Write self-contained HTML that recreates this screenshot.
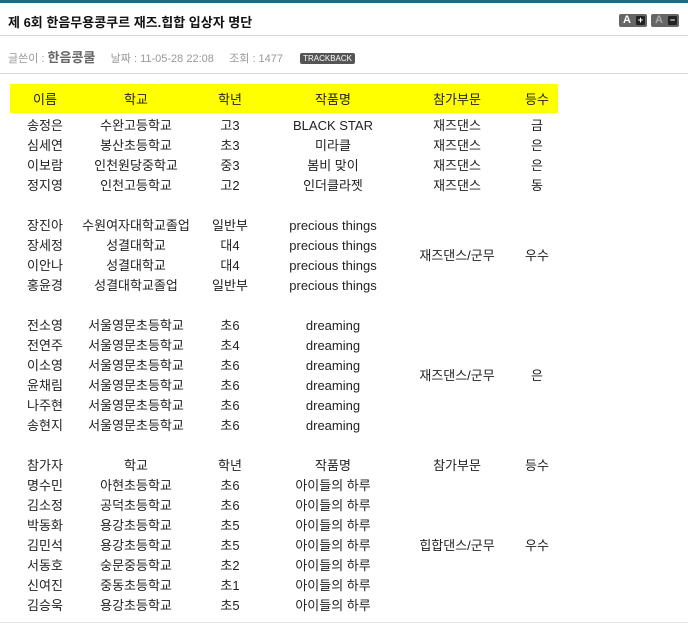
<!DOCTYPE html>
<html><head><meta charset="utf-8"><style>
body{margin:0;width:688px;height:624px;background:#fff;position:relative;overflow:hidden;font-family:"Liberation Sans","Noto Sans CJK KR",sans-serif;color:#222}
.topbar{position:absolute;left:0;top:0;width:688px;height:3px;background:#1d6a85}
.title{position:absolute;left:8px;top:12px;font-size:13px;font-weight:bold;color:#111}
.hr{position:absolute;left:0;width:688px;height:1px;background:#d8d8d8}
.meta{position:absolute;left:8px;top:47px;font-size:11px;color:#999}
.meta b{font-size:13px;color:#666}
.tb{display:inline-block;background:#555;color:#fff;font-size:8px;padding:1px 3px;border-radius:2px;vertical-align:1px;margin-left:14px}
.btn{position:absolute;top:14px;width:28px;height:13px;background:#666;border-radius:2px;font-size:11px;font-weight:bold;color:#fff;line-height:13px}
.btn span{position:absolute;left:4px}
.btn i{position:absolute;right:2px;top:2px;width:9px;height:9px;background:#222;border-radius:1px;color:#fff;font-style:normal;font-size:9px;line-height:9px;text-align:center}
.yellow{position:absolute;left:10px;top:84px;width:548px;height:29px;background:#ffff00}
.w{position:absolute;left:0;top:2px;width:688px;height:624px}
.r{position:absolute;left:0;height:20px;line-height:20px;font-size:13px;width:688px}
.r span{position:absolute;text-align:center;white-space:nowrap}
.a{left:10px;width:70px}.b{left:80px;width:112px}.c{left:192px;width:76px}.d{left:268px;width:130px}.e{left:398px;width:118px}.f{left:516px;width:42px}
</style></head><body>
<div class="topbar"></div>
<div class="title">제 6회 한음무용콩쿠르 재즈.힙합 입상자 명단</div>
<div class="btn" style="left:619px"><span>A</span><i>+</i></div>
<div class="btn" style="left:651px;color:#aaa"><span>A</span><i>−</i></div>
<div class="hr" style="top:35px"></div>
<div class="meta">글쓴이 : <b>한음콩쿨</b> &nbsp;&nbsp;&nbsp; 날짜 : 11-05-28 22:08 &nbsp;&nbsp;&nbsp; 조회 : 1477 <span class="tb">TRACKBACK</span></div>
<div class="hr" style="top:73px"></div>
<div class="hr" style="top:622px;background:#e4e4e4"></div>
<div class="yellow"></div>
<div class="w">
<div class="r" style="top:88px"><span class="a">이름</span><span class="b">학교</span><span class="c">학년</span><span class="d">작품명</span><span class="e">참가부문</span><span class="f">등수</span></div>

<div class="r" style="top:114px"><span class="a">송정은</span><span class="b">수완고등학교</span><span class="c">고3</span><span class="d">BLACK STAR</span><span class="e">재즈댄스</span><span class="f">금</span></div>
<div class="r" style="top:134px"><span class="a">심세연</span><span class="b">봉산초등학교</span><span class="c">초3</span><span class="d">미라클</span><span class="e">재즈댄스</span><span class="f">은</span></div>
<div class="r" style="top:154px"><span class="a">이보람</span><span class="b">인천원당중학교</span><span class="c">중3</span><span class="d">봄비 맞이</span><span class="e">재즈댄스</span><span class="f">은</span></div>
<div class="r" style="top:174px"><span class="a">정지영</span><span class="b">인천고등학교</span><span class="c">고2</span><span class="d">인더클라젯</span><span class="e">재즈댄스</span><span class="f">동</span></div>

<div class="r" style="top:214px"><span class="a">장진아</span><span class="b">수원여자대학교졸업</span><span class="c">일반부</span><span class="d">precious things</span></div>
<div class="r" style="top:234px"><span class="a">장세정</span><span class="b">성결대학교</span><span class="c">대4</span><span class="d">precious things</span></div>
<div class="r" style="top:244px"><span class="e">재즈댄스/군무</span><span class="f">우수</span></div>
<div class="r" style="top:254px"><span class="a">이안나</span><span class="b">성결대학교</span><span class="c">대4</span><span class="d">precious things</span></div>
<div class="r" style="top:274px"><span class="a">홍윤경</span><span class="b">성결대학교졸업</span><span class="c">일반부</span><span class="d">precious things</span></div>

<div class="r" style="top:314px"><span class="a">전소영</span><span class="b">서울영문초등학교</span><span class="c">초6</span><span class="d">dreaming</span></div>
<div class="r" style="top:334px"><span class="a">전연주</span><span class="b">서울영문초등학교</span><span class="c">초4</span><span class="d">dreaming</span></div>
<div class="r" style="top:354px"><span class="a">이소영</span><span class="b">서울영문초등학교</span><span class="c">초6</span><span class="d">dreaming</span></div>
<div class="r" style="top:364px"><span class="e">재즈댄스/군무</span><span class="f">은</span></div>
<div class="r" style="top:374px"><span class="a">윤채림</span><span class="b">서울영문초등학교</span><span class="c">초6</span><span class="d">dreaming</span></div>
<div class="r" style="top:394px"><span class="a">나주현</span><span class="b">서울영문초등학교</span><span class="c">초6</span><span class="d">dreaming</span></div>
<div class="r" style="top:414px"><span class="a">송현지</span><span class="b">서울영문초등학교</span><span class="c">초6</span><span class="d">dreaming</span></div>

<div class="r" style="top:454px"><span class="a">참가자</span><span class="b">학교</span><span class="c">학년</span><span class="d">작품명</span><span class="e">참가부문</span><span class="f">등수</span></div>
<div class="r" style="top:474px"><span class="a">명수민</span><span class="b">아현초등학교</span><span class="c">초6</span><span class="d">아이들의 하루</span></div>
<div class="r" style="top:494px"><span class="a">김소정</span><span class="b">공덕초등학교</span><span class="c">초6</span><span class="d">아이들의 하루</span></div>
<div class="r" style="top:514px"><span class="a">박동화</span><span class="b">용강초등학교</span><span class="c">초5</span><span class="d">아이들의 하루</span></div>
<div class="r" style="top:534px"><span class="a">김민석</span><span class="b">용강초등학교</span><span class="c">초5</span><span class="d">아이들의 하루</span><span class="e">힙합댄스/군무</span><span class="f">우수</span></div>
<div class="r" style="top:554px"><span class="a">서동호</span><span class="b">숭문중등학교</span><span class="c">초2</span><span class="d">아이들의 하루</span></div>
<div class="r" style="top:574px"><span class="a">신여진</span><span class="b">중동초등학교</span><span class="c">초1</span><span class="d">아이들의 하루</span></div>
<div class="r" style="top:594px"><span class="a">김승욱</span><span class="b">용강초등학교</span><span class="c">초5</span><span class="d">아이들의 하루</span></div>
</div>
</body></html>
